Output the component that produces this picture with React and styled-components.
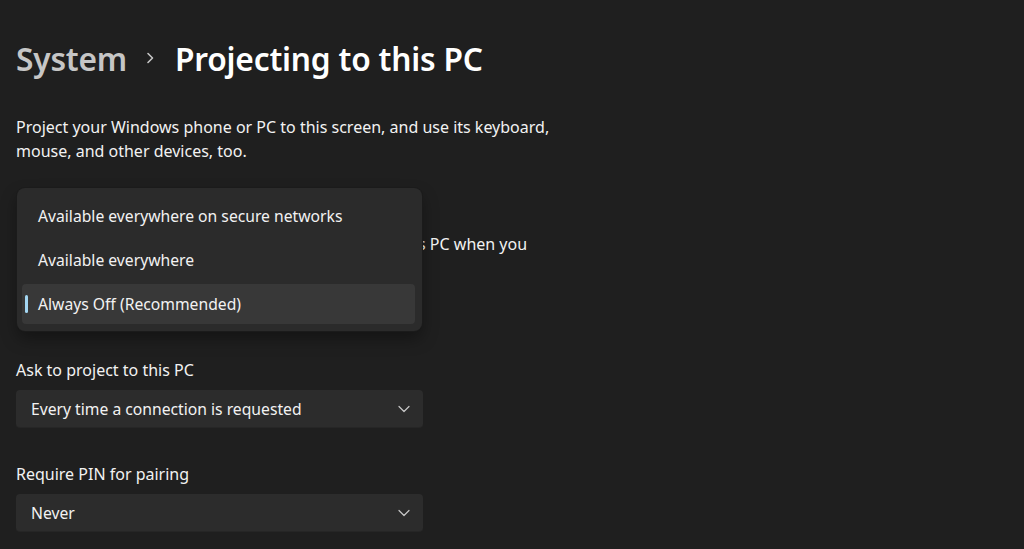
import styled, { createGlobalStyle } from 'styled-components';

const GlobalStyle = createGlobalStyle`
  html, body {
    margin: 0;
    padding: 0;
    background: #1f1f1f;
  }
  body {
    font-family: "Noto Sans", "Open Sans", sans-serif;
    color: #ffffff;
    -webkit-font-smoothing: antialiased;
  }
`;

const Page = styled.main`
  position: relative;
  width: 1024px;
  height: 549px;
  overflow: hidden;
  box-sizing: border-box;
  padding: 36px 0 0 16px;
  background: #1f1f1f;
`;

const Breadcrumb = styled.h1`
  display: flex;
  align-items: center;
  margin: 0;
  height: 44px;
  font-size: 31.7px;
  font-weight: 600;
  letter-spacing: -0.2px;
`;

const Crumb = styled.span`
  color: ${props => (props.$current ? '#ffffff' : '#c6c6c6')};
`;

const Separator = styled.span`
  display: flex;
  align-items: center;
  margin: 0 21px 0 19px;
`;

const Text = styled.p`
  margin: ${props => props.$top || 0}px 0 0;
  font-size: 16px;
  line-height: 24px;
  color: #f2f2f2;
  white-space: nowrap;
`;

const Field = styled.section`
  display: flex;
  flex-direction: column;
  gap: 8px;
  margin-top: ${props => props.$top}px;
  width: 407px;
`;

const Combo = styled.div`
  display: flex;
  align-items: center;
  justify-content: space-between;
  height: 38px;
  box-sizing: border-box;
  padding: 0 13px 0 15px;
  background: #2c2c2c;
  border-radius: 4px;
  border-bottom: 1px solid #262626;
  font-size: 15.7px;
  color: #f2f2f2;
`;

const Menu = styled.ul`
  position: absolute;
  top: 188px;
  left: 17px;
  width: 405px;
  margin: 0;
  padding: 8px 0 7px;
  box-sizing: border-box;
  list-style: none;
  display: flex;
  flex-direction: column;
  gap: 4px;
  background: #2b2b2b;
  border-radius: 8px;
  box-shadow: 0 0 0 1px #1b1b1b, 0 8px 16px rgba(0, 0, 0, 0.35);
`;

const Item = styled.li`
  position: relative;
  display: flex;
  align-items: center;
  height: 40px;
  margin: 0 7px 0 5px;
  padding-left: 16px;
  border-radius: 4px;
  font-size: 15.7px;
  color: #f2f2f2;
  background: ${props => (props.$selected ? '#383838' : 'transparent')};

  &::before {
    content: '';
    display: ${props => (props.$selected ? 'block' : 'none')};
    position: absolute;
    left: 3px;
    top: 11px;
    width: 3px;
    height: 18px;
    border-radius: 2px;
    background: #a3d6f2;
  }
`;

const Chevron = () => (
  <svg width="12" height="8" viewBox="0 0 12 8" fill="none">
    <path d="M1 1.5 6 6.5 11 1.5" stroke="#c8c8c8" strokeWidth="1.2" strokeLinecap="round" strokeLinejoin="round" />
  </svg>
);

const CrumbArrow = () => (
  <svg width="8" height="12" viewBox="0 0 8 12" fill="none">
    <path d="M2 1.5 6.5 6 2 10.5" stroke="#c6c6c6" strokeWidth="1.6" strokeLinecap="round" strokeLinejoin="round" />
  </svg>
);

const options = [
  'Available everywhere on secure networks',
  'Available everywhere',
  'Always Off (Recommended)',
];

const App = () => {
  return (
    <Page>
      <GlobalStyle />
      <Breadcrumb>
        <Crumb>System</Crumb>
        <Separator><CrumbArrow /></Separator>
        <Crumb $current>Projecting to this PC</Crumb>
      </Breadcrumb>

      <Text $top={35}>
        Project your Windows phone or PC to this screen, and use its keyboard,
        <br />
        mouse, and other devices, too.
      </Text>

      <Field $top={69}>
        <Text>
          Some Windows and Android devices can project to this PC when you
          <br />
          say it's OK
        </Text>
        <Combo>
          Always Off (Recommended)
          <Chevron />
        </Combo>
      </Field>

      <Field $top={32}>
        <Text>Ask to project to this PC</Text>
        <Combo>
          Every time a connection is requested
          <Chevron />
        </Combo>
      </Field>

      <Field $top={34}>
        <Text>Require PIN for pairing</Text>
        <Combo>
          Never
          <Chevron />
        </Combo>
      </Field>

      <Menu>
        {options.map(option => (
          <Item key={option} $selected={option === 'Always Off (Recommended)'}>
            {option}
          </Item>
        ))}
      </Menu>
    </Page>
  );
};

export default App;
